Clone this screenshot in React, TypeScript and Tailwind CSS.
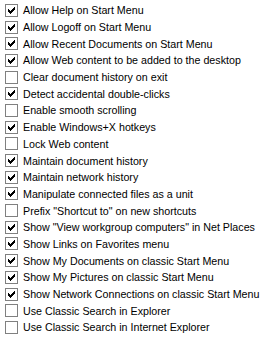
import React from "react";

const items: [string, boolean][] = [
  ["Allow Help on Start Menu", true],
  ["Allow Logoff on Start Menu", true],
  ["Allow Recent Documents on Start Menu", true],
  ["Allow Web content to be added to the desktop", true],
  ["Clear document history on exit", false],
  ["Detect accidental double-clicks", true],
  ["Enable smooth scrolling", false],
  ["Enable Windows+X hotkeys", true],
  ["Lock Web content", false],
  ["Maintain document history", true],
  ["Maintain network history", true],
  ["Manipulate connected files as a unit", true],
  ['Prefix "Shortcut to" on new shortcuts', false],
  ['Show "View workgroup computers" in Net Places', true],
  ["Show Links on Favorites menu", true],
  ["Show My Documents on classic Start Menu", true],
  ["Show My Pictures on classic Start Menu", true],
  ["Show Network Connections on classic Start Menu", true],
  ["Use Classic Search in Explorer", false],
  ["Use Classic Search in Internet Explorer", false],
];

// classic 7px tick, 3px tall per column
const tick = [2, 3, 4, 3, 2, 1, 0];

function Box({ checked }: { checked: boolean }) {
  return (
    <div className="w-[13px] h-[13px] border border-[#808080] bg-white flex items-center justify-center shrink-0">
      {checked && (
        <svg width="7" height="7" viewBox="0 0 7 7" shapeRendering="crispEdges">
          {tick.map((y, x) => (
            <rect key={x} x={x} y={y} width="1" height="3" fill="#000" />
          ))}
        </svg>
      )}
    </div>
  );
}

export default function App() {
  return (
    <div className="w-[262px] h-[338px] bg-white overflow-hidden pt-[2px] font-['Liberation_Sans',sans-serif] text-[10.7px] text-black">
      {items.map(([label, checked]) => (
        <div key={label} className="flex items-center h-[16.7px] pl-[5px] gap-[5px] whitespace-nowrap">
          <Box checked={checked} />
          <span>{label}</span>
        </div>
      ))}
    </div>
  );
}
